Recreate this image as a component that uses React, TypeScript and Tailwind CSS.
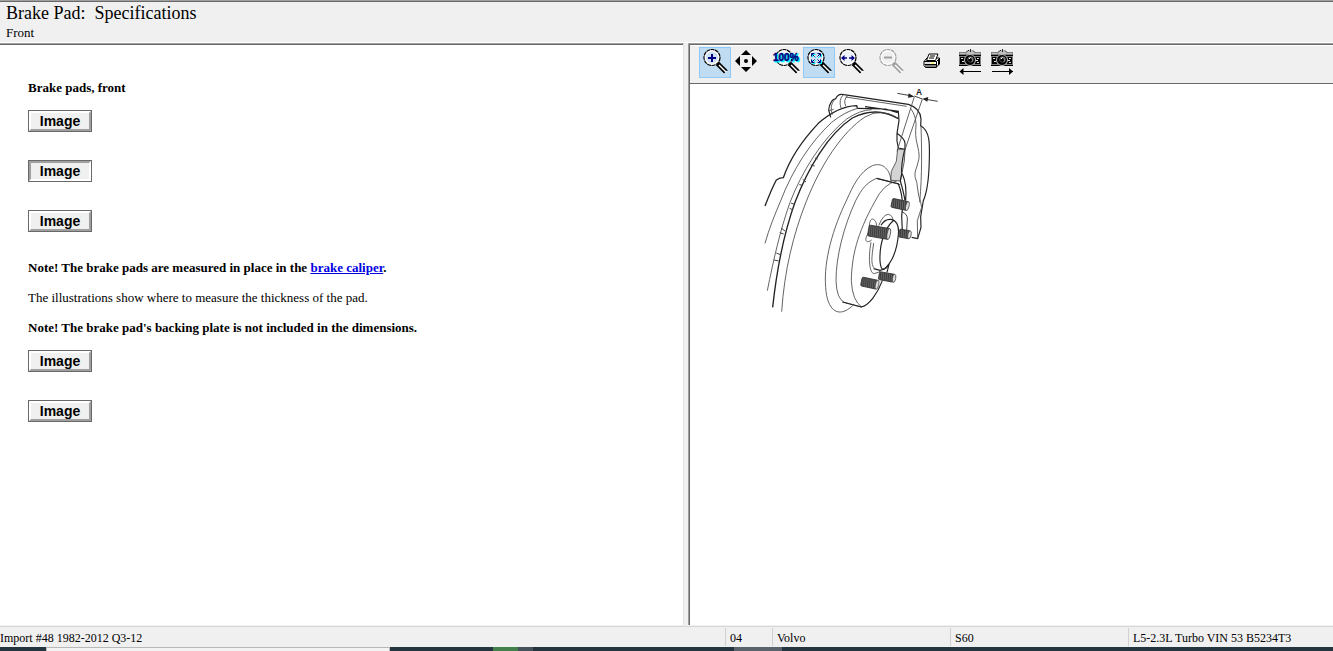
import React, { useState } from 'react'

const Handle = ({ color }: { color: string }) => (
  <>
    <path d="M18.5 16.5L26.5 24.5" stroke={color} strokeWidth="4.6" />
    <path d="M26 21.5l2.5 2.5M23.500 24l2.500 2" stroke={color} />
    <path d="M20 18L27 25" stroke="#fff" strokeWidth="1.4" />
  </>
)

const Lens = ({ color = "#000", fill = "#eef3f8" }: { color?: string; fill?: string }) => (
  <>
    <Handle color={color} />
    <circle cx="13" cy="10.5" r="8" fill="#fff" stroke={color} strokeWidth="1.2" strokeDasharray="4 0.5" />
    <circle cx="13" cy="10.5" r="6" fill={fill} />
  </>
)

const ZoomInIcon = () => (
  <svg width="32" height="31" viewBox="0 0 32 31" fill="none">
    <Lens fill="#cfe2f3" />
    <path d="M9 11h8M13 7v8" stroke="#000080" strokeWidth="2" />
  </svg>
)

const PanIcon = () => (
  <svg width="32" height="31" viewBox="0 0 32 31" fill="#000">
    <path d="M15 3l5 5h-10zM15 25l5-5h-10zM4 14l5-5v10zM26 14l-5-5v10z" />
    <circle cx="15" cy="14" r="2" />
  </svg>
)

const ActualSizeIcon = () => (
  <svg width="32" height="31" viewBox="0 0 32 31" fill="none">
    <Lens />
    <g fontFamily="'Liberation Sans', sans-serif" fontSize="10" fontWeight="bold">
      <text x="3" y="15" fill="#00ffff" stroke="#00ffff" strokeWidth="0.8">100%</text>
      <text x="2" y="14" fill="#000080" stroke="#000080" strokeWidth="0.5">100%</text>
    </g>
  </svg>
)

const FitIcon = () => (
  <svg width="32" height="31" viewBox="0 0 32 31" fill="none">
    <Lens fill="#cfe2f3" />
    <path d="M9.500 10V7.500h3M18.500 10V7.500h-3M9.500 13v3.500h3M18.500 13v3.500h-3" stroke="#00ffff" />
    <path d="M11 9l2 2M17 9l-2 2M11 15l2-2M17 15l-2-2" stroke="#00ffff" />
    <path d="M8.500 9.500V6.500h3M17.500 9.500V6.500h-3M8.500 12.500v3h3M17.500 12.500v3h-3" stroke="#000080" />
    <path d="M9 7l2.500 2.500M17 7l-2.500 2.500M9 15l2.500-2.500M17 15l-2.500-2.500" stroke="#000080" />
  </svg>
)

const FitWidthIcon = () => (
  <svg width="32" height="31" viewBox="0 0 32 31" fill="none">
    <Lens />
    <path d="M7 11h5M14 11h5" stroke="#000080" strokeWidth="1.400" />
    <path d="M6 11l3.500-3v6zM20 11l-3.500-3v6z" fill="#000080" />
  </svg>
)

const ZoomOutIcon = () => (
  <svg width="32" height="31" viewBox="0 0 32 31" fill="none">
    <Lens color="#a0a0a0" fill="#f0f0f0" />
    <path d="M9 10.500h8" stroke="#a0a0a0" strokeWidth="2" />
  </svg>
)

const PrinterIcon = () => (
  <svg width="32" height="31" viewBox="0 0 32 31" fill="none" stroke="#000">
    <path d="M9 14.500L12 11h12.500v6L21 20.500H10.500L9 18.500z" fill="#fff" />
    <path d="M11.500 13.500L14 7h9l-2.500 6.500z" fill="#fff" />
    <path d="M15 9h5M14 11h5" />
    <path d="M9 14.500h12.500M21.500 14.500v6M21.500 14.500l3-3M9.500 17.500h12M23.500 13v5M10 19h11" />
    <path d="M16 16h3" stroke="#f5ed00" />
    <path d="M10 16h5" stroke="#c0c0c0" />
  </svg>
)

const CameraIcon = ({ next }: { next?: boolean }) => (
  <svg width="32" height="31" viewBox="0 0 32 31" fill="none">
    <path d="M4 5h22v14H4z" fill="#808080" />
    <path d="M4 8.500h22M4 18.500h22" stroke="#000" />
    <path d="M5 6.500h5M20 6.500h5" stroke="#c0c0c0" />
    <path d="M10 7l3-4h5l3 4z" fill="#c0c0c0" />
    <path d="M11 5.500l2-2h1M18 3.500l2 2M15.500 2v3" stroke="#222" />
    <path d="M5 10h5v7H5zM20 10h5v7h-5z" fill="#000" />
    <path d="M6 11.500h2M7 14.500h2M22 11.500h2M22 15.500h2M21 13.500h2" stroke="#ddd" />
    <circle cx="15" cy="13" r="5.500" fill="#000" stroke="#c0c0c0" />
    <circle cx="15.500" cy="12.500" r="3" fill="#808080" />
    <circle cx="15" cy="13" r="2" fill="#000" />
    <path d="M14 12l1.500-1.500" stroke="#fff" />
    <path d="M5 24.500h21" stroke="#000" />
    {next ? <path d="M26 24.500l-4-3.500v7z" fill="#000" /> : <path d="M4.500 24.500l4-3.500v7z" fill="#000" />}
  </svg>
)

type Tool = { name: string; icon: React.ReactNode; active?: boolean; disabled?: boolean }

const toolGroups: Tool[][] = [
  [
    { name: "Zoom in", icon: <ZoomInIcon />, active: true },
    { name: "Pan", icon: <PanIcon /> },
  ],
  [
    { name: "Actual size", icon: <ActualSizeIcon /> },
    { name: "Fit to window", icon: <FitIcon />, active: true },
    { name: "Fit to width", icon: <FitWidthIcon /> },
  ],
  [{ name: "Zoom out", icon: <ZoomOutIcon />, disabled: true }],
  [{ name: "Print", icon: <PrinterIcon /> }],
  [
    { name: "Previous image", icon: <CameraIcon /> },
    { name: "Next image", icon: <CameraIcon next /> },
  ],
]

const Toolbar = () => (
  <div className="flex gap-2 border-t border-b border-t-white border-b-[#696969] bg-[#f0f0f0] pt-px pb-[5px] pl-[9px]">
    {toolGroups.map((group, i) => (
      <div key={i} className="flex">
        {group.map((tool) => (
          <button
            key={tool.name}
            aria-label={tool.name}
            disabled={tool.disabled}
            className={tool.active ? "w-8 bg-[#c0dcf3] outline outline-1 -outline-offset-1 outline-[#90c8f6]" : "w-8"}
          >
            {tool.icon}
          </button>
        ))}
      </div>
    ))}
  </div>
)

// threaded wheel stud, drawn along its own axis
const Stud = ({ x, y, w, h, angle }: { x: number; y: number; w: number; h: number; angle: number }) => (
  <g transform={`translate(${x} ${y}) rotate(${angle})`}>
    <rect width={w} height={h} rx="4" fill="url(#thread)" stroke="#333" strokeWidth="2.5" />
    <ellipse cx={w - 2} cy={h / 2} rx="5" ry={h / 2} fill="#ddd" stroke="#333" strokeWidth="2" />
  </g>
)

const BrakeDrawing = () => (
  <svg width="200" height="240" viewBox="0 0 600 720" fill="none" stroke="#444" strokeWidth="2.5" role="img" aria-label="Brake pad thickness A">
    <defs>
      <pattern id="thread" width="6" height="6" patternUnits="userSpaceOnUse" patternTransform="rotate(-15)">
        <rect width="6" height="6" fill="#bbb" />
        <path d="M2 0v6" stroke="#333" strokeWidth="3" />
      </pattern>
    </defs>
    {/* disc */}
    <path d="M30 366C42 335 52 310 64 288Q75 281 85 281C108 215 155 155 190 118C230 83 265 66 305 65L307 72" stroke="#222" strokeWidth="4" />
    <path d="M30 478C42 435 58 395 78 348C112 260 165 175 230 115Q270 83 308 73" />
    <path d="M37 620C55 530 75 440 105 355C140 265 200 165 275 105Q315 78 350 77" />
    <path d="M53 670C66 550 86 450 120 355C160 250 220 150 292 102Q365 65 430 104" stroke="#222" strokeWidth="4" />
    <path d="M80 683C88 560 115 450 154 352C196 245 260 145 330 99Q378 70 430 103" />
    <path d="M180 222l8 3M167 243l12 3M143 286l10 8M133 302l10 2M108 357l10 4M104 373l10 5M78 432l12 9M74 446l12 4M64 507l12 5M57 528l14 3" strokeWidth="3" />
    {/* caliper */}
    <path d="M227 100L221 78Q225 47 242 44Q249 27 267 32L460 61Q496 72 498 105L497 125C526 140 524 185 523 225C522 280 514 330 505 350L497 398L498 430L488 464L470 460" stroke="#222" strokeWidth="3.5" />
    <path d="M240 45Q222 65 232 92M265 32Q250 48 258 72M278 35Q264 48 272 66M222 80l14-4" />
    <path d="M272 39L455 67" />
    <path d="M307 73L392 75L428 86M330 68L430 82L432 110L426 148Q449 164 450 178L450 196L430 192Q424 172 426 148" stroke="#222" strokeWidth="3.5" />
    <path d="M498 125C500 190 502 270 494 355" />
    <path d="M466 72Q488 100 482 140C480 180 500 205 489 235C486 252 478 260 480 278C490 300 486 330 497 355L500 370L487 410L488 463" />
    <path d="M428 195L450 197L448 232L436 291L407 289L409 262L424 232z" fill="#d4d4d4" />
    <path d="M449 197Q438 240 440 270L436 291Q446 325 450 350M442 270Q456 300 452 350" stroke="#222" strokeWidth="3.5" />
    {/* dimension A */}
    <path d="M478 38L426 202M502 45L449 200" />
    <path d="M427 28L472 36M548 52L508 45M478 36L502 45" strokeWidth="3" />
    <path d="M478 38L461 28L459 41zM502 44L520 39L517 53z" fill="#222" stroke="none" />
    <text x="492" y="32" textAnchor="middle" fontSize="25" fontWeight="bold" fontFamily="'Liberation Sans', sans-serif" fill="#222" stroke="none">A</text>
    {/* hub */}
    <path d="M408 290C404 250 378 235 352 245C315 262 294 305 275 348C235 430 205 530 212 610C216 680 250 705 293 665" />
    <path d="M436 302L365 283C335 295 320 315 302 350C265 430 243 520 243 590Q245 645 268 655L320 669" />
    <path d="M425 291Q385 300 360 352C305 450 290 520 289 590Q292 650 320 669" />
    <path d="M365 283L430 299Q448 345 440 395L442 440M402 540Q400 550 396 565M382 590C368 628 342 665 318 669L262 654" stroke="#222" strokeWidth="3.5" />
    <path d="M440 383Q458 390 457 405L455 440" strokeWidth="3" />
    <path d="M371 425Q385 390 401 391Q415 396 413 410M340 448C325 470 335 480 350 468M343 430C342 390 368 405 364 430" />
    <path d="M378 424Q390 403 412 407Q434 415 430 453C425 510 402 555 375 559L356 554" stroke="#222" strokeWidth="3.5" />
    <path d="M417 408C391 430 373 475 375 530Q378 575 402 543" stroke="#222" strokeWidth="3.5" />
    <path d="M348 475C338 530 345 575 360 568Q372 566 378 559M356 477C350 520 347 540 358 553" />
    <Stud x={413} y={343} w={50} h={27} angle={12} />
    <Stud x={343} y={423} w={64} h={33} angle={10} />
    <Stud x={434} y={435} w={34} h={24} angle={10} />
    <Stud x={374} y={563} w={48} h={24} angle={10} />
    <Stud x={322} y={579} w={50} h={27} angle={12} />
  </svg>
)

const ImageButton = ({ id, selected, onSelect }: { id: number; selected: number; onSelect: (id: number) => void }) => (
  <button
    onClick={() => onSelect(id)}
    className="block h-[22px] w-16 border border-[#696969] font-['Liberation_Sans',sans-serif] text-sm font-bold"
  >
    <span
      className={
        selected === id
          ? "flex h-5 items-center justify-center border-2 border-t-[#a0a0a0] border-r-white border-b-white border-l-[#a0a0a0] bg-[#f0f0f0]"
          : "flex h-5 items-center justify-center border-2 border-t-white border-r-[#a0a0a0] border-b-[#a0a0a0] border-l-white bg-[#f0f0f0]"
      }
    >
      Image
    </span>
  </button>
)

const App = () => {
  const [selected, setSelected] = useState(2);
  return (
    <div className="flex min-h-screen flex-col bg-[#f0f0f0] font-['Liberation_Serif',serif] text-[13px] leading-[15px] text-black">
      <header className="border-t border-[#a0a0a0]">
        <div className="border-t border-b border-t-[#696969] border-b-white px-[6px] pb-px">
          <h1 className="text-lg leading-[22px] whitespace-pre">Brake Pad:  Specifications</h1>
          <p className="leading-[17px]">Front</p>
        </div>
      </header>
      <main className="flex flex-1">
        <section className="w-[51.3%] border-t border-r border-t-[#a0a0a0] border-r-[#e3e3e3]">
          <div className="flex h-full flex-col items-start border-t border-[#696969] bg-white px-7 pt-[35px]">
            <p className="font-bold">Brake pads, front</p>
            <div className="mt-[15px] flex flex-col gap-7">
              <ImageButton id={1} selected={selected} onSelect={setSelected} />
              <ImageButton id={2} selected={selected} onSelect={setSelected} />
              <ImageButton id={3} selected={selected} onSelect={setSelected} />
            </div>
            <div className="mt-7 flex flex-col gap-[15px]">
              <p className="font-bold">
                Note! The brake pads are measured in place in the <a href="#caliper" className="text-[#0000e0] underline">brake caliper</a>.
              </p>
              <p>The illustrations show where to measure the thickness of the pad.</p>
              <p className="font-bold">Note! The brake pad's backing plate is not included in the dimensions.</p>
            </div>
            <div className="mt-[15px] flex flex-col gap-7">
              <ImageButton id={4} selected={selected} onSelect={setSelected} />
              <ImageButton id={5} selected={selected} onSelect={setSelected} />
            </div>
          </div>
        </section>
        <section className="ml-1 flex-1 border-t border-l border-[#a0a0a0]">
          <div className="h-full border-t border-l border-[#696969] bg-white">
            <Toolbar />
            <div className="pl-[65px]">
              <BrakeDrawing />
            </div>
          </div>
        </section>
      </main>
      <footer className="mt-px border-t border-[#d7d7d7] text-xs">
        <div className="flex h-5 items-stretch">
          <span className="flex-1 leading-[22px]">Import #48 1982-2012 Q3-12</span>
          <span className="my-px w-[47px] border-l border-[#d0d0d0] pl-1 leading-5">04</span>
          <span className="my-px w-[178px] border-l border-[#d0d0d0] pl-1 leading-5">Volvo</span>
          <span className="my-px w-[178px] border-l border-[#d0d0d0] pl-1 leading-5">S60</span>
          <span className="my-px w-[205px] border-l border-[#d0d0d0] pl-1 leading-5">L5-2.3L Turbo VIN 53 B5234T3</span>
        </div>
        <div className="flex h-1 bg-[#253540]">
          <div className="ml-[46px] w-[344px] border border-b-0 border-[#b8b8b8] bg-[#f3f3f3]" />
          <div className="ml-[103px] w-[25px] bg-[#43804b]" />
          <div className="w-[15px] bg-[#44525c]" />
          <div className="ml-[201px] w-12 bg-[#5a636c]" />
        </div>
      </footer>
    </div>
  );
}

export default App
